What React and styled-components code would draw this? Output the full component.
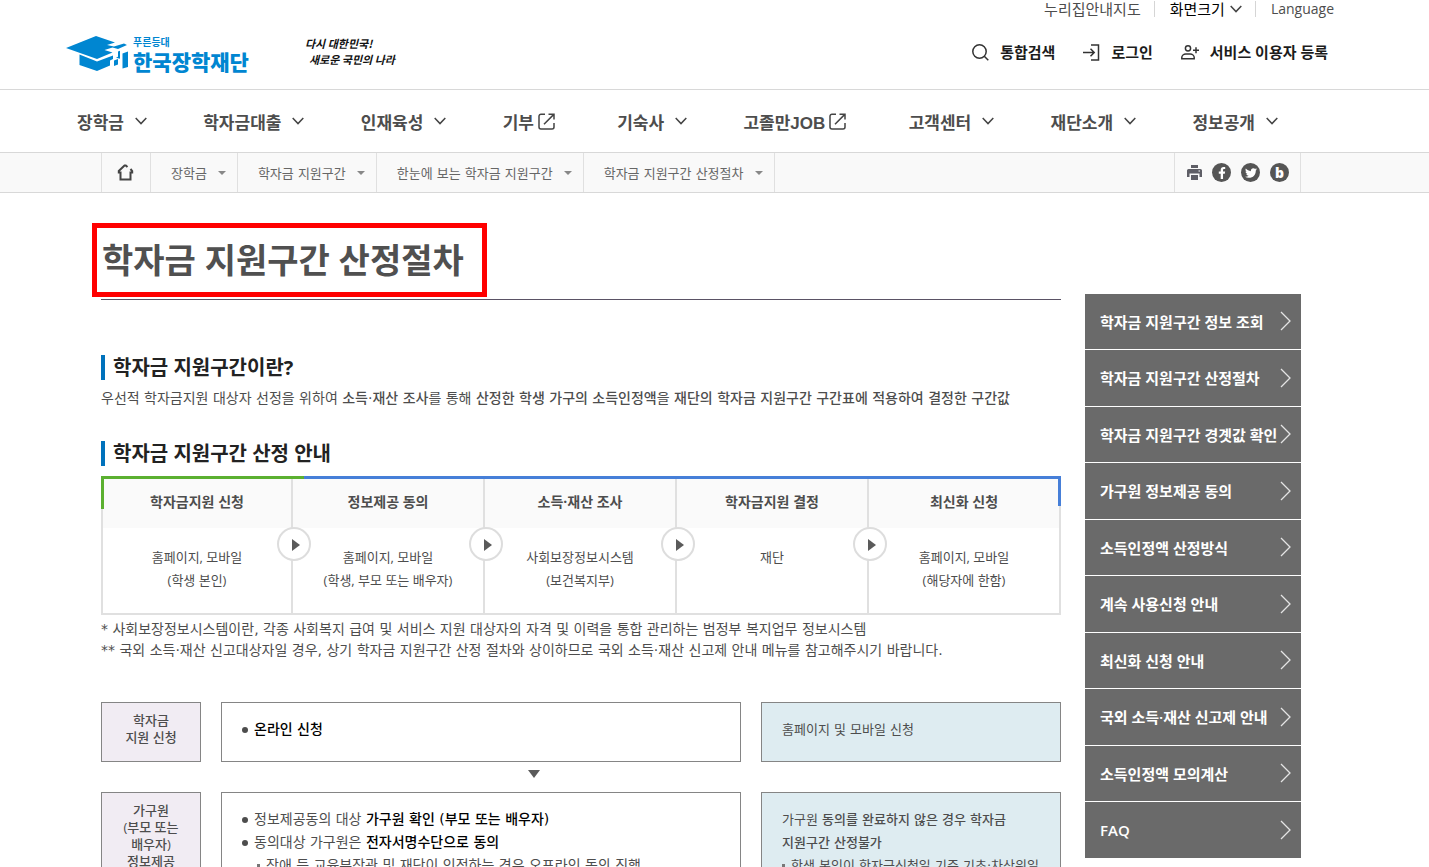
import React from 'react'
import styled, { createGlobalStyle, css } from 'styled-components'
import { FaFacebookF, FaTwitter } from 'react-icons/fa'

const GlobalStyle = createGlobalStyle`
  * {
    box-sizing: border-box;
  }
  html {
    scrollbar-width: none;
  }
  body {
    margin: 0;
    background: #fff;
    color: #4d4d4d;
    font-family: "Open Sans", "Noto Sans CJK KR", sans-serif;
    font-size: 14px;
    word-break: keep-all;
  }
  h1, h2, p, ul, ol {
    margin: 0;
    padding: 0;
  }
  ul, ol {
    list-style: none;
  }
  a {
    color: inherit;
    text-decoration: none;
  }
  button {
    border: 0;
    padding: 0;
    background: none;
    color: inherit;
    font: inherit;
    cursor: pointer;
  }
  svg {
    display: block;
    flex: none;
  }
`;

/* ---------- header ---------- */

const Header = styled.header`
  display: flex;
  justify-content: space-between;
  height: 90px;
  padding: 0 95px 0 66px;
  border-bottom: 1px solid #d8d8d8;
`;

const Brand = styled.div`
  display: flex;
  align-items: center;
  gap: 56px;
  padding-top: 18px;
`;

const Logo = styled.a`
  display: flex;
  align-items: center;
  gap: 4px;
  color: #0086d1;
`;

const LogoText = styled.span`
  display: flex;
  flex-direction: column;
  font-family: "Noto Sans CJK KR", sans-serif;
  font-size: 21px;
  font-weight: 900;
  line-height: 24px;
`;

const LogoSmall = styled.small`
  font-size: 10px;
  font-weight: 700;
  line-height: 14px;
`;

const Slogan = styled.p`
  color: #111;
  font-family: "Noto Sans CJK KR", sans-serif;
  font-size: 11px;
  font-style: italic;
  font-weight: 700;
  line-height: 16px;
  padding-bottom: 6px;

  span {
    display: block;
    padding-left: 4px;
  }
`;

const HeaderSide = styled.div`
  display: flex;
  flex-direction: column;
  align-items: flex-end;
  gap: 24px;
`;

const Utility = styled.ul`
  display: flex;
  align-items: center;
  height: 18px;
  font-size: 15px;
  line-height: 18px;

  li {
    display: flex;
    align-items: center;
  }
  li + li::before {
    content: "";
    width: 1px;
    height: 16px;
    margin: 0 15px 0 13px;
    background: #d5d5d5;
  }
`;

const SizeButton = styled.button`
  display: flex;
  align-items: center;
  gap: 5px;
  color: #000;
`;

const LightLink = styled.a`
  font-size: 14px;
  font-weight: 400;
`;

const Account = styled.ul`
  display: flex;
  gap: 28px;
  padding-right: 6px;
  color: #1c1c1c;
  font-size: 15px;
  font-weight: 700;
  line-height: 20px;

  a {
    display: flex;
    align-items: center;
    gap: 11px;
  }
`;

/* ---------- main menu ---------- */

const Nav = styled.nav`
  height: 63px;
  padding: 0 151px 0 77px;
  border-bottom: 1px solid #d8d8d8;
`;

const NavList = styled.ul`
  display: flex;
  align-items: center;
  justify-content: space-between;
  height: 62px;
  font-family: "Liberation Sans", "Noto Sans CJK KR", sans-serif;
  font-size: 17px;
  font-weight: 700;
`;

const NavLink = styled.a`
  display: flex;
  align-items: center;
  gap: ${(p) => (p.$external ? '4px' : '11px')};
  padding-right: ${(p) => (p.$external ? '6px' : '0')};
  white-space: nowrap;
`;

/* ---------- breadcrumb ---------- */

const CrumbBar = styled.div`
  display: flex;
  justify-content: space-between;
  height: 40px;
  padding: 0 128px 0 101px;
  border-bottom: 1px solid #d8d8d8;
  background: #f9f9f9;
`;

const Crumbs = styled.ol`
  display: flex;
  border-left: 1px solid #e0e0e0;
  color: #666;
  font-family: "DejaVu Sans", "Noto Sans CJK KR", sans-serif;
  font-size: 13px;

  li {
    border-right: 1px solid #e0e0e0;
  }
`;

const Crumb = styled.a`
  display: flex;
  align-items: center;
  gap: 11px;
  height: 100%;
  padding: 0 ${(p) => (p.$home ? '16px 0 15px' : '11px 0 20px')};
`;

const CrumbArrow = styled.i`
  border: 4px solid transparent;
  border-top-color: #888;
  border-bottom: 0;
`;

const Share = styled.div`
  display: flex;
  align-items: center;
  gap: 10px;
  padding: 0 11px 0 12px;
  border: solid #e0e0e0;
  border-width: 0 1px;
`;

const RoundButton = styled.button`
  display: flex;
  align-items: center;
  justify-content: center;
  width: 19px;
  height: 19px;
  border-radius: 50%;
  background: #555;
  color: #fff;
  font-size: 14px;
  font-weight: 800;
  line-height: 19px;
`;

/* ---------- page ---------- */

const Page = styled.div`
  display: flex;
  align-items: flex-start;
  gap: 24px;
  padding: 30px 128px 0 101px;
`;

const Main = styled.main`
  flex: 1;
  min-width: 0;
`;

const TitleRow = styled.div`
  padding-bottom: 2px;
  border-bottom: 1px solid #5a5265;
`;

const Title = styled.h1`
  width: fit-content;
  margin-left: -9px;
  padding: 0 18px 0 5px;
  border: 5px solid #f00;
  color: #505050;
  font-size: 34px;
  font-weight: 700;
  line-height: 64px;
`;

const Section = styled.section`
  margin-top: ${(p) => p.$top};
`;

const SectionTitle = styled.h2`
  padding-left: 8px;
  border-left: 4px solid #0072bc;
  color: #222;
  font-size: 20px;
  font-weight: 700;
  line-height: 25px;
`;

const BodyText = styled.p`
  font-family: "DejaVu Sans", "Noto Sans CJK KR", sans-serif;
  line-height: 21px;
  margin-top: ${(p) => p.$top || '0'};

  strong {
    font-weight: 500;
  }
`;

const Flow = styled.ol`
  position: relative;
  display: grid;
  grid-template-columns: repeat(5, 1fr);
  margin-top: 10px;
  padding-top: 3px;
  border-bottom: 2px solid #e0e0e0;
  background: linear-gradient(90deg, #5bb030 203px, #467fd8 203px) top / 100% 3px no-repeat;

  &::before,
  &::after {
    content: "";
    position: absolute;
    top: 0;
    width: 3px;
    z-index: 1;
  }
  &::before {
    left: 0;
    height: 33px;
    background: #5bb030;
  }
  &::after {
    right: 0;
    height: 30px;
    background: #467fd8;
  }
`;

const Step = styled.li`
  position: relative;
  border-right: 2px solid #e0e0e0;
  font-size: 13px;
  line-height: 23px;
  text-align: center;

  &:first-child {
    border-left: 2px solid #e0e0e0;
  }
`;

const StepHead = styled.div`
  background: #fafafa;
  font-size: 14px;
  font-weight: 700;
  line-height: 45px;
  padding-bottom: 4px;
`;

const StepBody = styled.div`
  min-height: 85px;
  padding: 18px 0 21px;
  white-space: pre-line;
`;

const StepArrow = styled.span`
  position: absolute;
  top: 48px;
  right: -20px;
  z-index: 1;
  display: flex;
  align-items: center;
  justify-content: center;
  width: 34px;
  height: 34px;
  border: 2px solid #ddd;
  border-radius: 50%;
  background: #fff;

  &::before {
    content: "";
    border: 6px solid transparent;
    border-left: 8px solid #5a5a5a;
    border-right: 0;
    margin: 2px 0 0 4px;
  }
`;

const ProcessRow = styled.div`
  display: grid;
  grid-template-columns: 100px 1fr 300px;
  gap: 20px;
`;

const boxed = css`
  border: 1px solid #858585;
  min-height: 60px;
`;

const StageBox = styled.div`
  ${boxed}
  padding: 9px 4px;
  background: #f1ecf3;
  font-size: 13px;
  font-weight: 500;
  line-height: 17px;
  text-align: center;
  white-space: pre-line;
`;

const DetailBox = styled.div`
  ${boxed}
  padding: 15px 20px;
  font-family: "DejaVu Sans", "Noto Sans CJK KR", sans-serif;
  line-height: 23px;
`;

const NoteBox = styled(DetailBox)`
  background: #deecf1;
  font-size: 13px;

  strong {
    font-weight: 500;
  }
`;

const Bullet = styled.li`
  position: relative;
  padding-left: 12px;

  &::before {
    content: "";
    position: absolute;
    left: 0;
    top: 9px;
    width: 6px;
    height: 6px;
    border-radius: 50%;
    background: #4d4d4d;
  }
  strong {
    color: #000;
    font-weight: 500;
  }
`;

const SubBullet = styled.li`
  position: relative;
  margin-left: ${(p) => (p.$flush ? '0' : '15px')};
  padding-left: 9px;

  &::before {
    content: "";
    position: absolute;
    left: 0;
    top: 10px;
    width: 3px;
    height: 3px;
    background: #777;
  }
`;

const Down = styled.div`
  display: flex;
  justify-content: center;
  height: 30px;
  padding: 8px 95px 0 0;

  &::before {
    content: "";
    height: 8px;
    border: 6px solid transparent;
    border-top: 8px solid #5a5a5a;
    border-bottom: 0;
  }
`;

/* ---------- quick menu ---------- */

const Aside = styled.aside`
  flex: none;
  width: 216px;
  margin-top: 71px;
`;

const QuickList = styled.ul`
  display: grid;
  gap: 1px;
`;

const QuickLink = styled.a`
  display: flex;
  align-items: center;
  justify-content: space-between;
  height: 55px;
  padding: 0 10px 1px 15px;
  background: #6a6a6a;
  color: #fff;
  font-size: 15px;
  font-weight: 600;
  white-space: nowrap;

  li:nth-child(even) & {
    height: 56px;
  }
`;

const menus = [
  { name: '장학금' },
  { name: '학자금대출' },
  { name: '인재육성' },
  { name: '기부', external: true },
  { name: '기숙사' },
  { name: '고졸만JOB', external: true },
  { name: '고객센터' },
  { name: '재단소개' },
  { name: '정보공개' },
]

const crumbs = ['장학금', '학자금 지원구간', '한눈에 보는 학자금 지원구간', '학자금 지원구간 산정절차']

const steps = [
  { head: '학자금지원 신청', body: '홈페이지, 모바일\n(학생 본인)' },
  { head: '정보제공 동의', body: '홈페이지, 모바일\n(학생, 부모 또는 배우자)' },
  { head: '소득·재산 조사', body: '사회보장정보시스템\n(보건복지부)' },
  { head: '학자금지원 결정', body: '재단' },
  { head: '최신화 신청', body: '홈페이지, 모바일\n(해당자에 한함)' },
]

const quickLinks = [
  '학자금 지원구간 정보 조회',
  '학자금 지원구간 산정절차',
  '학자금 지원구간 경곗값 확인',
  '가구원 정보제공 동의',
  '소득인정액 산정방식',
  '계속 사용신청 안내',
  '최신화 신청 안내',
  '국외 소득·재산 신고제 안내',
  '소득인정액 모의계산',
  'FAQ',
]

const Chevron = () => (
  <svg width="12" height="8" viewBox="0 0 12 8" fill="none" stroke="#444" strokeWidth="1.5">
    <path d="M.7 1 6 6.6 11.3 1" />
  </svg>
)

const ExternalIcon = () => (
  <svg width="17" height="17" viewBox="0 0 17 17" fill="none" stroke="#444" strokeWidth="1.5">
    <path d="M7 1.2H3A2 2 0 0 0 1 3.200V14a2 2 0 0 0 2 2h11a2 2 0 0 0 2-2v-4" />
    <path d="M10.500 1.200H16V6.500M15.800 1.400 6 11.200" />
  </svg>
)

const CapLogo = () => (
  <svg width="63" height="36" viewBox="0 0 63 36" fill="#0086d1">
    <path d="M0 12 30 0l19 6.500-8 2.500 7 1.500L58 7.500l3 1.500-9 4-5.500-1.500-8 2.500 8 2.500L31 23Z" />
    <path d="M13.500 18.500 31 25.500l16-6V23l-3 1.500v5L31 35l-17.500-6Z" />
    <path d="M48 24.500l4-1.500v5.500l-4 1.500ZM56.500 17.500l5.500-2v15.500l-5.500 1.500Z" />
    <path d="M52 15.500l2-.8v8l-4-1 2-1Z" />
  </svg>
)

const SearchIcon = () => (
  <svg width="17" height="17" viewBox="0 0 17 17" fill="none" stroke="#333" strokeWidth="1.5">
    <circle cx="7.500" cy="7.500" r="6.700" />
    <path d="m12.300 12.300 4 4" />
  </svg>
)

const LoginIcon = () => (
  <svg width="17" height="17" viewBox="0 0 17 17" fill="none" stroke="#333" strokeWidth="1.5">
    <path d="M8 1h7.500v15H8M0 8.500h11M7.500 4.800l3.700 3.700-3.700 3.700" />
  </svg>
)

const UserPlusIcon = () => (
  <svg width="18" height="17" viewBox="0 0 18 17" fill="none" stroke="#333" strokeWidth="1.500">
    <circle cx="7" cy="4.300" r="2.600" />
    <path d="M.8 14.800v-1.300c0-2 2-3.500 4-3.500h4.400c2 0 4 1.500 4 3.500v1.300ZM15 3.200v6M12 6.200h6" />
  </svg>
)

const HomeIcon = () => (
  <svg width="17" height="17" viewBox="0 0 17 17" fill="none" stroke="#444" strokeWidth="2">
    <path d="M10.500 3 8.800 1.500H7.500L1.800 7v1.500h1.700V15.500h10V8.500h1.700V7L13.500 5" />
  </svg>
)

const PrintIcon = () => (
  <svg width="15" height="15" viewBox="0 0 15 15" fill="#5e5e66">
    <path d="M4 0h7v3H4ZM1.500 4h12A1.500 1.500 0 0 1 15 5.500V12h-2.500V8.500h-10V12H0V5.500A1.500 1.500 0 0 1 1.500 4Z" />
    <path d="M4 10h7v5H4Z" />
    <path d="M11.500 5.500h1.500v1h-1.500Z" fill="#fff" />
  </svg>
)

const ArrowRight = () => (
  <svg width="11" height="20" viewBox="0 0 11 20" fill="none" stroke="#e4e4e4" strokeWidth="1.300">
    <path d="m1 1 9 9-9 9" />
  </svg>
)

function App() {
  return (
    <>
      <GlobalStyle />
      <Header>
        <Brand>
          <Logo href="#">
            <CapLogo />
            <LogoText>
              <LogoSmall>푸른등대</LogoSmall>
              한국장학재단
            </LogoText>
          </Logo>
          <Slogan>
            다시 대한민국!
            <span>새로운 국민의 나라</span>
          </Slogan>
        </Brand>
        <HeaderSide>
          <Utility>
            <li><a href="#">누리집안내지도</a></li>
            <li><SizeButton type="button">화면크기<Chevron /></SizeButton></li>
            <li><LightLink href="#">Language</LightLink></li>
          </Utility>
          <Account>
            <li><a href="#"><SearchIcon />통합검색</a></li>
            <li><a href="#"><LoginIcon />로그인</a></li>
            <li><a href="#"><UserPlusIcon />서비스 이용자 등록</a></li>
          </Account>
        </HeaderSide>
      </Header>

      <Nav>
        <NavList>
          {menus.map((menu) => (
            <li key={menu.name}>
              <NavLink href="#" $external={menu.external}>
                {menu.name}
                {menu.external ? <ExternalIcon /> : <Chevron />}
              </NavLink>
            </li>
          ))}
        </NavList>
      </Nav>

      <CrumbBar>
        <Crumbs>
          <li><Crumb href="#" $home aria-label="홈"><HomeIcon /></Crumb></li>
          {crumbs.map((name) => (
            <li key={name}><Crumb href="#">{name}<CrumbArrow /></Crumb></li>
          ))}
        </Crumbs>
        <Share>
          <button type="button" aria-label="인쇄"><PrintIcon /></button>
          <RoundButton type="button" aria-label="페이스북"><FaFacebookF size={12} /></RoundButton>
          <RoundButton type="button" aria-label="트위터"><FaTwitter size={12} /></RoundButton>
          <RoundButton type="button">b</RoundButton>
        </Share>
      </CrumbBar>

      <Page>
        <Main>
          <TitleRow>
            <Title>학자금 지원구간 산정절차</Title>
          </TitleRow>

          <Section $top="55px">
            <SectionTitle>학자금 지원구간이란?</SectionTitle>
            <BodyText $top="8px">
              우선적 학자금지원 대상자 선정을 위하여 <strong>소득·재산 조사</strong>를 통해 <strong>산정한 학생 가구의 소득인정액</strong>을 <strong>재단의 학자금 지원구간 구간표에 적용하여 결정한 구간값</strong>
            </BodyText>
          </Section>

          <Section $top="32px">
            <SectionTitle>학자금 지원구간 산정 안내</SectionTitle>
            <Flow>
              {steps.map((step, i) => (
                <Step key={step.head}>
                  <StepHead>{step.head}</StepHead>
                  <StepBody>{step.body}</StepBody>
                  {i < steps.length - 1 && <StepArrow />}
                </Step>
              ))}
            </Flow>
            <BodyText $top="4px">* 사회보장정보시스템이란, 각종 사회복지 급여 및 서비스 지원 대상자의 자격 및 이력을 통합 관리하는 범정부 복지업무 정보시스템</BodyText>
            <BodyText>** 국외 소득·재산 신고대상자일 경우, 상기 학자금 지원구간 산정 절차와 상이하므로 국외 소득·재산 신고제 안내 메뉴를 참고해주시기 바랍니다.</BodyText>
          </Section>

          <Section $top="41px">
            <ProcessRow>
              <StageBox>{'학자금\n지원 신청'}</StageBox>
              <DetailBox>
                <ul>
                  <Bullet><strong>온라인 신청</strong></Bullet>
                </ul>
              </DetailBox>
              <NoteBox>홈페이지 및 모바일 신청</NoteBox>
            </ProcessRow>
            <Down />
            <ProcessRow>
              <StageBox>{'가구원\n(부모 또는\n배우자)\n정보제공'}</StageBox>
              <DetailBox>
                <ul>
                  <Bullet>정보제공동의 대상 <strong>가구원 확인 (부모 또는 배우자)</strong></Bullet>
                  <Bullet>동의대상 가구원은 <strong>전자서명수단으로 동의</strong></Bullet>
                  <SubBullet>장애 등 교육부장관 및 재단이 인정하는 경우 오프라인 동의 진행</SubBullet>
                </ul>
              </DetailBox>
              <NoteBox>
                <p>가구원 <strong>동의를 완료하지 않은 경우 학자금<br />지원구간 산정불가</strong></p>
                <ul>
                  <SubBullet $flush>학생 본인이 학자금신청일 기준 기초·차상위일</SubBullet>
                </ul>
              </NoteBox>
            </ProcessRow>
          </Section>
        </Main>

        <Aside>
          <QuickList>
            {quickLinks.map((name) => (
              <li key={name}>
                <QuickLink href="#">{name}<ArrowRight /></QuickLink>
              </li>
            ))}
          </QuickList>
        </Aside>
      </Page>
    </>
  )
}

export default App
